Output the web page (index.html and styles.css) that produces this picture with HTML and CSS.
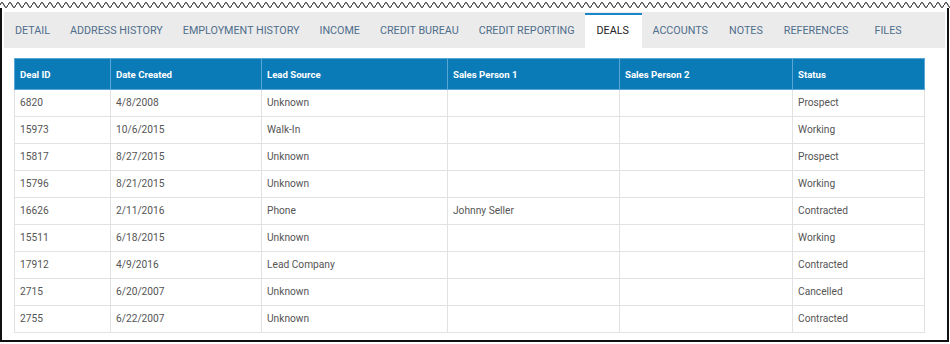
FILE: index.html
```html
<!DOCTYPE html>
<html>
<head>
<meta charset="utf-8">
<link rel="stylesheet" href="styles.css">
</head>
<body>
<div class="shot">
  <svg class="tear" width="950" height="8" viewBox="0 0 950 8">
    <defs>
      <pattern id="wave" width="8" height="8" patternUnits="userSpaceOnUse">
        <path d="M0 5 Q2 0 4 5 Q6 10 8 5" fill="none" stroke="#111" stroke-width="1"/>
      </pattern>
    </defs>
    <rect x="0" y="0" width="950" height="8" fill="url(#wave)"/>
  </svg>
  <div class="frame">
    <nav class="tabs">
      <span class="tab">DETAIL</span>
      <span class="tab">ADDRESS HISTORY</span>
      <span class="tab">EMPLOYMENT HISTORY</span>
      <span class="tab">INCOME</span>
      <span class="tab">CREDIT BUREAU</span>
      <span class="tab">CREDIT REPORTING</span>
      <span class="tab active">DEALS</span>
      <span class="tab">ACCOUNTS</span>
      <span class="tab">NOTES</span>
      <span class="tab">REFERENCES</span>
      <span class="tab files">FILES</span>
    </nav>
    <div class="panel">
      <table class="deals">
        <colgroup>
          <col class="c1"><col class="c2"><col class="c3"><col class="c4"><col class="c5"><col class="c6">
        </colgroup>
        <thead>
          <tr><th>Deal ID</th><th>Date Created</th><th>Lead Source</th><th>Sales Person 1</th><th>Sales Person 2</th><th>Status</th></tr>
        </thead>
        <tbody>
          <tr><td>6820</td><td>4/8/2008</td><td>Unknown</td><td></td><td></td><td>Prospect</td></tr>
          <tr><td>15973</td><td>10/6/2015</td><td>Walk-In</td><td></td><td></td><td>Working</td></tr>
          <tr><td>15817</td><td>8/27/2015</td><td>Unknown</td><td></td><td></td><td>Prospect</td></tr>
          <tr><td>15796</td><td>8/21/2015</td><td>Unknown</td><td></td><td></td><td>Working</td></tr>
          <tr><td>16626</td><td>2/11/2016</td><td>Phone</td><td>Johnny Seller</td><td></td><td>Contracted</td></tr>
          <tr><td>15511</td><td>6/18/2015</td><td>Unknown</td><td></td><td></td><td>Working</td></tr>
          <tr><td>17912</td><td>4/9/2016</td><td>Lead Company</td><td></td><td></td><td>Contracted</td></tr>
          <tr><td>2715</td><td>6/20/2007</td><td>Unknown</td><td></td><td></td><td>Cancelled</td></tr>
          <tr><td>2755</td><td>6/22/2007</td><td>Unknown</td><td></td><td></td><td>Contracted</td></tr>
        </tbody>
      </table>
    </div>
  </div>
</div>
</body>
</html>
```
FILE: styles.css
```css
html, body {
  margin: 0;
  padding: 0;
  background: #fff;
}
.shot {
  width: 950px;
  height: 344px;
  font-family: Roboto, "Liberation Sans", sans-serif;
}
.tear {
  display: block;
}
.frame {
  width: 949px;
  height: 334px;
  border-left: 2px solid #111;
  border-right: 2px solid #111;
  border-bottom: 2px solid #111;
  padding: 4px 2px 0 2px;
  box-sizing: border-box;
}
.tabs {
  display: flex;
  height: 36px;
  background: #ebebeb;
  padding-left: 1px;
}
.tab {
  display: flex;
  align-items: center;
  padding: 0 10px;
  font-size: 10.75px;
  color: #4f6e8c;
  white-space: nowrap;
}
.tab.active {
  background: #fff;
  color: #222;
  border-top: 2px solid #1b87c9;
  margin-top: 1px;
  padding: 0 13px 2px 12px;
}
.tab.active ~ .tab {
  padding: 0 10.5px;
}
.tab.active ~ .tab.files {
  padding-left: 15.5px;
}
.panel {
  padding: 10px;
}
.deals {
  border-collapse: collapse;
  table-layout: fixed;
  width: 910px;
  font-size: 10.2px;
}
.c1 { width: 96px; }
.c2 { width: 151px; }
.c3 { width: 186px; }
.c4 { width: 172px; }
.c5 { width: 173px; }
.c6 { width: 132px; }
.deals th {
  background: #0b7bb8;
  color: #fff;
  font-weight: bold;
  font-size: 9.6px;
  text-align: left;
  height: 31px;
  padding: 0 5px;
  border: 1px solid #5aa6d6;
  box-sizing: border-box;
}
.deals td {
  height: 27px;
  padding: 0 5px 1px;
  color: #555;
  border: 1px solid #e2e2e2;
  box-sizing: border-box;
}
```
